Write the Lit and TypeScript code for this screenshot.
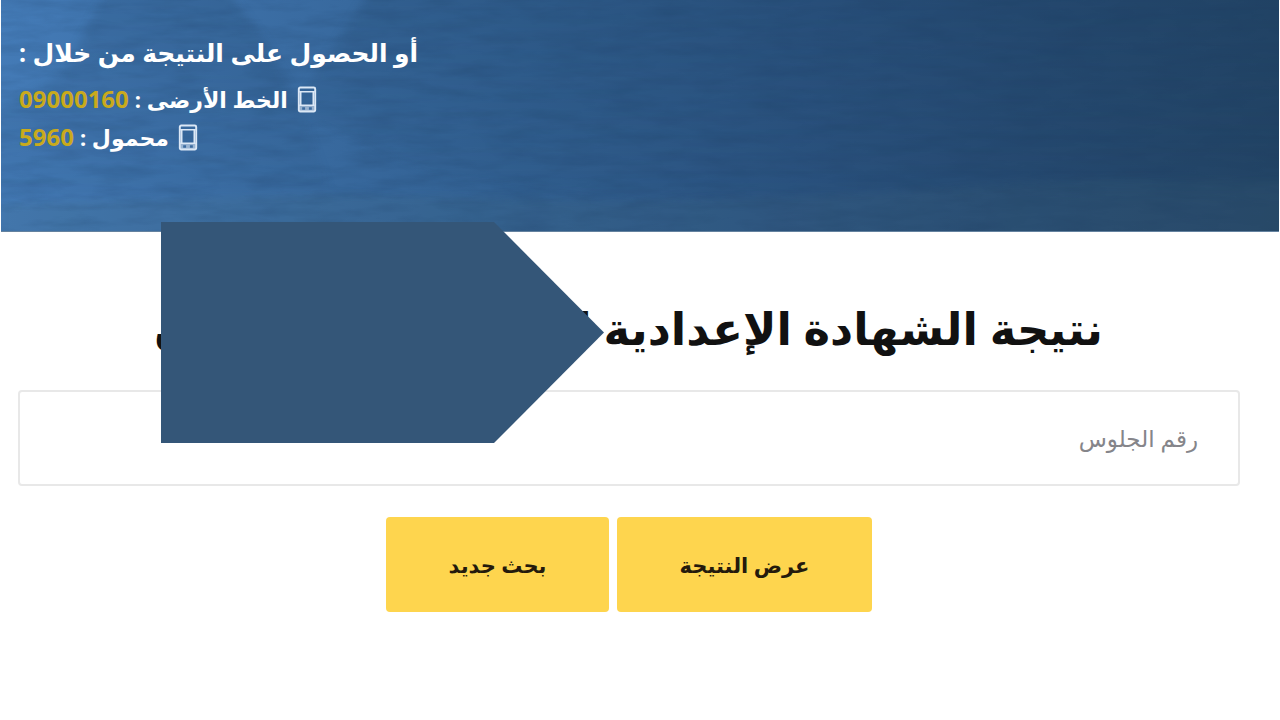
import { LitElement, html, css, svg } from "lit";
import { customElement, state } from "lit/decorators.js";

const phoneIcon = svg`<svg class="phone" viewBox="0 0 20 28" aria-hidden="true">
  <path fill="none" stroke="currentColor" stroke-width="2" d="M3 1.500h14a1.500 1.500 0 0 1 1.500 1.500v22a1.500 1.500 0 0 1-1.500 1.500H3A1.500 1.500 0 0 1 1.500 25V3A1.500 1.500 0 0 1 3 1.500z"/>
  <path fill="none" stroke="currentColor" stroke-width="1.600" d="M2 6h16M3.500 6v14M16.500 6v14M2 20h16"/>
  <path fill="currentColor" d="M2 20h16v6H2z" opacity="0.6"/>
  <path fill="#3b6ba0" d="M5 22h3v2.500H5zM12 22h3v2.500h-3z"/>
</svg>`;

@customElement("result-banner")
export class ResultBanner extends LitElement {
  static styles = css`
    :host { display: block; }
    .banner {
      position: relative;
      overflow: hidden;
      box-sizing: border-box;
      min-height: 232px;
      padding: 32px 18px;
      margin: 0 1px;
      background: linear-gradient(100deg, #447bb7 0%, #3a6ca2 22%, #315f90 42%, #2b5380 62%, #264a71 80%, #234465 100%);
      border-bottom: 1px solid #64829f;
      color: #fff;
    }
    .scene { position: absolute; inset: 0; width: 100%; height: 100%; }
    .info {
      position: relative;
      display: flex;
      flex-direction: column;
      align-items: flex-end;
      font-weight: bold;
    }
    .title { margin: 0 0 8px; font-size: 25px; line-height: 40px; }
    .line { display: flex; align-items: center; gap: 9px; margin: 0; font-size: 22px; line-height: 38px; }
    .number { color: #c9aa1c; text-decoration: none; font-size: 24px; }
    .entry { display: inline-flex; gap: 6px; }
    .phone { width: 20px; height: 27px; color: #dce8f6; }
  `;

  render() {
    return html`<header class="banner">
      <svg class="scene" viewBox="0 0 1280 232" preserveAspectRatio="none" aria-hidden="true">
        <defs>
          <filter id="strata" x="0" y="0" width="100%" height="100%" color-interpolation-filters="sRGB">
            <feTurbulence type="fractalNoise" baseFrequency="0.02 0.09" numOctaves="4" seed="8"/>
            <feColorMatrix values="0 0 0 0 0.1  0 0 0 0 0.22  0 0 0 0 0.36  1.2 0 0 0 -0.45"/>
          </filter>
          <filter id="soft" color-interpolation-filters="sRGB"><feGaussianBlur stdDeviation="4"/></filter>
          <linearGradient id="dusk" x1="0" y1="0" x2="0" y2="1">
            <stop offset="0" stop-color="#1c3e60" stop-opacity="0.22"/>
            <stop offset="1" stop-color="#1c3e60" stop-opacity="0.03"/>
          </linearGradient>
        </defs>
        <g filter="url(#soft)">
          <path d="M105-10 L225-10 L265 40 L300 110 L330 190 L-20 200 L-20 120 L60 75 L85 30z" fill="url(#dusk)"/>
          <path d="M370-10 L1290-10 L1290 200 L850 190 L720 205 L600 195 L430 175 L290 110z" fill="url(#dusk)"/>
          <path d="M0 205 L320 195 L620 202 L880 194 L1060 182 L1290 180 L1290 240 L0 240z" fill="#45687f" opacity="0.16"/>
        </g>
        <rect width="1280" height="232" filter="url(#strata)" opacity="0.28"/>
      </svg>
      <div class="info">
        <h2 class="title">أو الحصول على النتيجة من خلال :</h2>
        <p class="line">${phoneIcon}<span class="entry"><span>الخط الأرضى :</span><a class="number" href="tel:09000160">09000160</a></span></p>
        <p class="line">${phoneIcon}<span class="entry"><span>محمول :</span><a class="number" href="tel:5960">5960</a></span></p>
      </div>
    </header>`;
  }
}

@customElement("result-search")
export class ResultSearch extends LitElement {
  @state() private seat = "";

  static styles = css`
    :host { display: block; }
    .search { position: relative; padding: 58px 40px 0 18px; }
    .heading {
      display: flex;
      justify-content: space-between;
      margin: 0 137px 24px 136px;
      font-size: 45px;
      line-height: 76px;
      font-weight: bold;
      color: #111;
      white-space: nowrap;
    }
    .arrow {
      position: absolute;
      top: -10px;
      left: 161px;
      width: 443px;
      height: 221px;
      background: #345678;
      clip-path: polygon(0 0, 333px 0, 100% 50%, 333px 100%, 0 100%);
    }
    .seat {
      display: block;
      box-sizing: border-box;
      width: 100%;
      height: 96px;
      padding: 0 40px;
      border: 2px solid #e8e8e8;
      border-radius: 4px;
      background: #fff;
      font: inherit;
      font-size: 23px;
      color: #333;
      outline: none;
    }
    .seat::placeholder { color: #85858a; opacity: 1; }
    .actions { display: flex; justify-content: center; gap: 8px; margin-top: 31px; }
    .action {
      height: 95px;
      border: 0;
      border-radius: 4px;
      background: #fed54e;
      font: inherit;
      font-size: 21px;
      font-weight: bold;
      color: #241a0c;
      cursor: pointer;
    }
    .show { width: 255px; }
    .reset { width: 223px; }
  `;

  render() {
    return html`<form class="search" @submit=${(e: Event) => e.preventDefault()}>
      <h1 class="heading"><span>نتيجة الشهادة الإعدادية ا</span><span>ن</span></h1>
      <input class="seat" type="text" placeholder="رقم الجلوس" aria-label="رقم الجلوس"
        .value=${this.seat} @input=${(e: Event) => (this.seat = (e.target as HTMLInputElement).value)}>
      <div class="actions">
        <button class="action show" type="submit">عرض النتيجة</button>
        <button class="action reset" type="button" @click=${() => (this.seat = "")}>بحث جديد</button>
      </div>
      <div class="arrow" aria-hidden="true"></div>
    </form>`;
  }
}

@customElement("app-root")
export class AppRoot extends LitElement {
  static styles = css`
    :host {
      display: block;
      min-height: 100vh;
      background: #fff;
      direction: rtl;
      font-family: "Noto Sans", "DejaVu Sans", sans-serif;
    }
  `;

  render() {
    return html`<result-banner></result-banner><main><result-search></result-search></main>`;
  }
}
